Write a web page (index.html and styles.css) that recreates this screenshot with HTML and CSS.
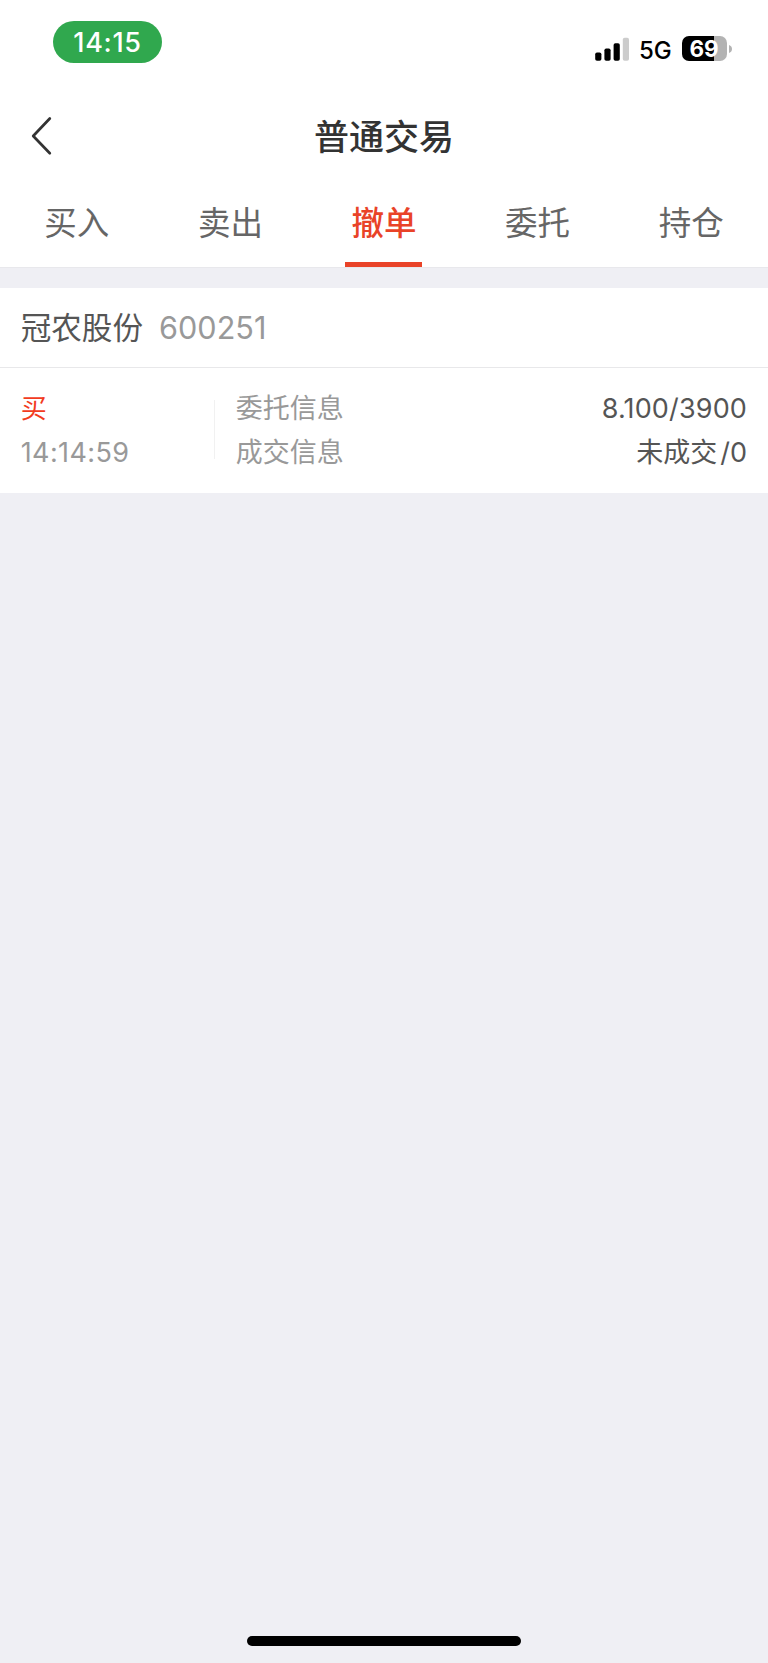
FILE: index.html
```
<!DOCTYPE html>
<html lang="zh-CN">
<head>
  <meta charset="UTF-8" />
  <meta name="viewport" content="width=device-width, initial-scale=1.0"/>
  <title>普通交易</title>
  <link rel="stylesheet" href="styles.css">
</head>
<body>

  <header class="top">
    <div class="status-bar">
      <span class="status-time">14:15</span>
      <div class="status-right">
        <svg class="signal" width="35" height="24" viewBox="0 0 35 24">
          <rect x="0.2" y="15.5" width="6.2" height="8.3" rx="1.8"/>
          <rect x="9.4" y="11.5" width="6.2" height="12.3" rx="1.8"/>
          <rect x="18.6" y="6.2" width="6.2" height="17.6" rx="1.8"/>
          <rect x="27.8" y="0.8" width="6.2" height="23" rx="1.8" fill="#ccc"/>
        </svg>
        <span class="network">5G</span>
        <div class="battery"><span>69</span></div>
        <svg class="battery-tip" width="3" height="8" viewBox="0 0 3 8">
          <path d="M0 0 Q3 1.2 3 4 Q3 6.8 0 8 Z" fill="#b3b3b3"/>
        </svg>
      </div>
    </div>

    <div class="nav-bar">
      <svg class="back" width="24" height="40" viewBox="0 0 24 40">
        <path d="M19.8 2.5 L3.2 20 L19.8 37.2" fill="none" stroke="#333" stroke-width="2.7" stroke-linecap="round" stroke-linejoin="round"/>
      </svg>
      <h1>普通交易</h1>
    </div>

    <nav class="tabs">
      <a class="tab">买入</a>
      <a class="tab">卖出</a>
      <a class="tab active">撤单</a>
      <a class="tab">委托</a>
      <a class="tab">持仓</a>
    </nav>
  </header>

  <main class="order">
    <div class="order-head">
      <span class="stock-name">冠农股份</span>
      <span class="stock-code">600251</span>
    </div>
    <div class="order-body">
      <div class="order-side">
        <p class="buy">买</p>
        <p class="time">14:14:59</p>
      </div>
      <div class="order-info">
        <p><span>委托信息</span><span class="value number">8.100/3900</span></p>
        <p><span>成交信息</span><span class="value">未成交<i>/0</i></span></p>
      </div>
    </div>
  </main>

  <footer class="home">
    <div class="home-bar"></div>
  </footer>

</body>
</html>
```
FILE: styles.css
```
* {
  box-sizing: border-box;
}

body {
  margin: 0;
  min-height: 1663px;
  display: flex;
  flex-direction: column;
  background: #efeff4;
  font-family: Inter, "Noto Sans CJK SC", sans-serif;
  color: #555;
}

h1, p {
  margin: 0;
}

.top {
  height: 268px;
  background: #fff;
  border-bottom: 1px solid #e8e8ec;
}

/* status bar */
.status-bar {
  height: 96px;
  padding: 21px 36px 0 53px;
  display: flex;
  justify-content: space-between;
  align-items: flex-start;
}

.status-time {
  width: 109px;
  height: 42px;
  border-radius: 21px;
  background: #30a84e;
  color: #fff;
  font-size: 27px;
  font-weight: 500;
  line-height: 43px;
  letter-spacing: 0.7px;
  text-align: center;
}

.status-right {
  display: flex;
  align-items: center;
  height: 25px;
  margin-top: 15px;
  color: #000;
}

.network {
  width: 33px;
  margin: 3px 10px 0 9px;
  font-size: 24px;
  font-weight: 500;
  line-height: 25px;
}

.battery {
  width: 45px;
  height: 25px;
  padding-right: 1px;
  border-radius: 7px;
  background: linear-gradient(to right, #000 71%, #b3b3b3 71%);
  color: #fff;
  font-size: 22.5px;
  font-weight: 700;
  line-height: 26px;
  text-align: center;
}

.battery-tip {
  margin: 1px 0 0 2px;
}

/* title */
.nav-bar {
  height: 80px;
  padding: 0 30px;
  display: grid;
  grid-template-columns: 24px 1fr 24px;
  align-items: center;
}

h1 {
  padding-top: 3px;
  color: #333;
  font-size: 35px;
  font-weight: 500;
  line-height: 77px;
  text-align: center;
}

.tabs {
  display: flex;
  height: 91px;
}

.tab {
  flex: 1;
  color: #666;
  font-size: 32.5px;
  line-height: 95px;
  text-align: center;
}

.tab.active {
  color: #e94328;
  font-weight: 500;
  background: linear-gradient(#e94328, #e94328) center bottom / 77px 5px no-repeat;
}

/* order card */
.order {
  margin-top: 20px;
  background: #fff;
}

.order-head {
  height: 80px;
  padding: 0 20.7px;
  display: flex;
  align-items: center;
  gap: 16px;
  border-bottom: 1px solid #e8e8ea;
  font-size: 30.6px;
  line-height: 79px;
}

.stock-code {
  color: #999;
}

.order-body {
  height: 125px;
  padding: 19px 21px 0 20.7px;
  display: flex;
  font-size: 27px;
  line-height: 44px;
  color: #999;
}

.order-side {
  width: 194.3px;
  background: linear-gradient(#f1f1f1, #f1f1f1) right 13px / 1px 59px no-repeat;
}

.buy {
  height: 44px;
  color: #f23c1e;
  font-size: 26px;
}

.time {
  letter-spacing: 0.4px;
}

.order-info {
  flex: 1;
  padding-left: 20.7px;
}

.order-info p {
  display: flex;
  justify-content: space-between;
}

.value {
  color: #555;
}

.number {
  letter-spacing: 0.15px;
}

.value i {
  margin-left: 3px;
  font-style: normal;
}

.home {
  margin-top: auto;
  padding-bottom: 17px;
}

.home-bar {
  width: 274px;
  height: 10px;
  margin: 0 auto;
  border-radius: 5px;
  background: #000;
}
```
